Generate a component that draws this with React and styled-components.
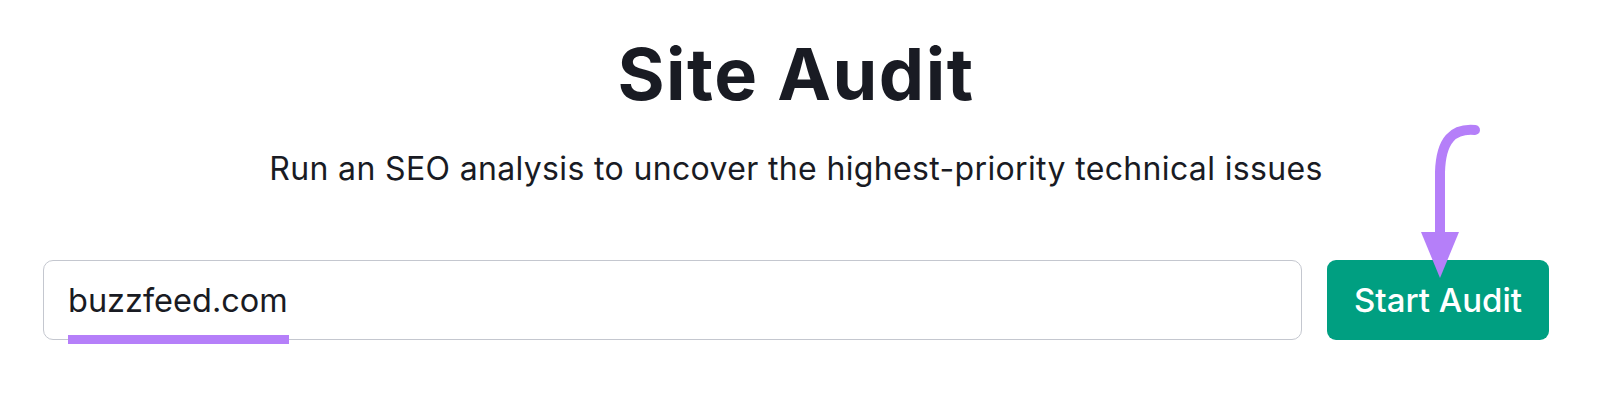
import React from "react";
import styled, { createGlobalStyle } from "styled-components";

const Global = createGlobalStyle`
  html, body { margin: 0; padding: 0; background: #ffffff; }
  body { font-family: Inter, "Noto Sans", Arial, sans-serif; color: #191b23; }
`;

const Page = styled.main`
  width: 1600px;
  height: 401px;
  box-sizing: border-box;
  display: flex;
  flex-direction: column;
  align-items: center;
  padding: 29px 51px 0 43px;
`;

const Title = styled.h1`
  margin: 0;
  font-family: Inter, "Noto Sans", sans-serif;
  font-weight: 700;
  font-size: 72px;
  line-height: 90px;
  letter-spacing: 1.5px;
  color: #191b23;
`;

const Subtitle = styled.p`
  margin: 32px 0 0;
  font-size: 32px;
  line-height: 36px;
  letter-spacing: 0.35px;
  font-weight: 400;
  color: #191b23;
`;

const FormRow = styled.div`
  align-self: stretch;
  margin-top: 73px;
  display: flex;
  gap: 25px;
`;

const InputWrap = styled.div`
  position: relative;
  flex: 1;
`;

const Input = styled.div`
  box-sizing: border-box;
  height: 80px;
  border: 1.5px solid #c4c7cf;
  border-radius: 10px;
  display: flex;
  align-items: center;
  padding: 0 24px;
  font-size: 32.5px;
  color: #191b23;
  background: #fff;
`;

const Underline = styled.span`
  position: absolute;
  left: 25px;
  top: 75px;
  width: 221px;
  height: 9px;
  background: #b57ff9;
`;

const ButtonWrap = styled.div`
  position: relative;
  width: 222px;
  flex: none;
`;

const Button = styled.button`
  width: 100%;
  height: 80px;
  border: none;
  border-radius: 9px;
  background: #009f81;
  color: #ffffff;
  font-family: Inter, "Noto Sans", sans-serif;
  font-size: 33px;
  font-weight: 500;
  cursor: pointer;
`;

const Arrow = styled.svg`
  position: absolute;
  left: 90px;
  top: -140px;
  overflow: visible;
`;

export default function App() {
  return (
    <>
      <Global />
      <Page>
        <Title>Site Audit</Title>
        <Subtitle>Run an SEO analysis to uncover the highest-priority technical issues</Subtitle>
        <FormRow>
          <InputWrap>
            <Input>buzzfeed.com</Input>
            <Underline />
          </InputWrap>
          <ButtonWrap>
            <Button>Start Audit</Button>
            <Arrow width="70" height="160" viewBox="0 0 70 160">
              <path
                d="M58 10 C 36 8, 24 20, 23 52 L 23 120"
                fill="none"
                stroke="#b57ff9"
                strokeWidth="10"
                strokeLinecap="round"
              />
              <polygon points="4,112 42,112 23,158" fill="#b57ff9" />
            </Arrow>
          </ButtonWrap>
        </FormRow>
      </Page>
    </>
  );
}
